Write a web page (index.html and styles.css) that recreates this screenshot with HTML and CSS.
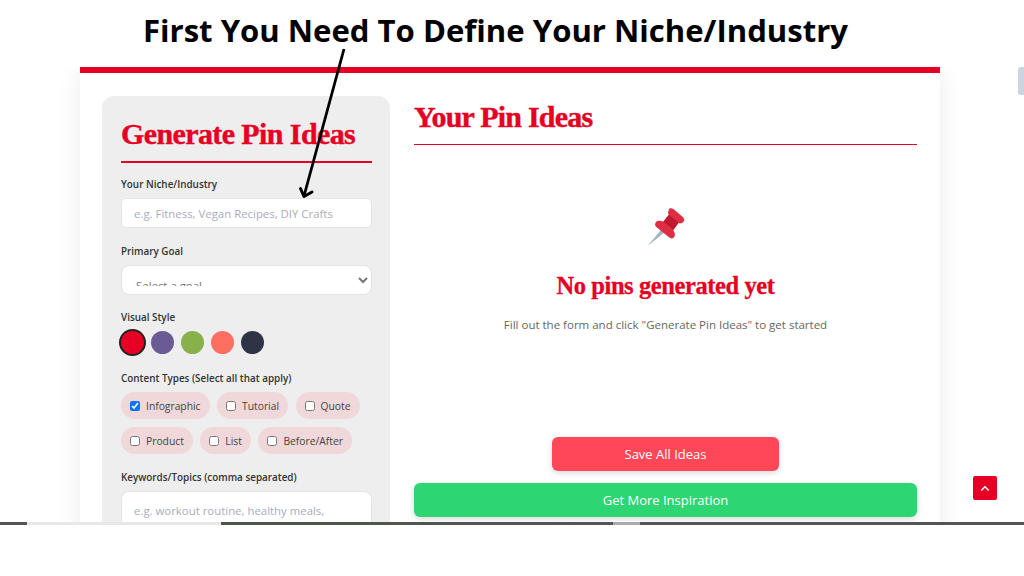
FILE: index.html
```html
<!DOCTYPE html>
<html lang="en">
<head>
  <meta charset="utf-8">
  <title>Generate Pin Ideas</title>
  <link rel="stylesheet" href="styles.css">
</head>
<body>

<h1 class="caption">First You Need To Define Your Niche/Industry</h1>

<div class="stage">
  <div class="card">
    <aside class="sidebar">
      <h2 class="side-title">Generate Pin Ideas</h2>

      <label class="field-label">Your Niche/Industry</label>
      <input class="text-input" type="text" placeholder="e.g. Fitness, Vegan Recipes, DIY Crafts">

      <label class="field-label">Primary Goal</label>
      <select class="select-input">
        <option>Select a goal</option>
      </select>

      <label class="field-label">Visual Style</label>
      <div class="swatches">
        <span class="swatch swatch-red"></span>
        <span class="swatch swatch-purple"></span>
        <span class="swatch swatch-green"></span>
        <span class="swatch swatch-coral"></span>
        <span class="swatch swatch-navy"></span>
      </div>

      <label class="field-label">Content Types (Select all that apply)</label>
      <div class="chips">
        <label class="chip"><input type="checkbox" checked>Infographic</label>
        <label class="chip"><input type="checkbox">Tutorial</label>
        <label class="chip"><input type="checkbox">Quote</label>
        <label class="chip"><input type="checkbox">Product</label>
        <label class="chip"><input type="checkbox">List</label>
        <label class="chip"><input type="checkbox">Before/After</label>
      </div>

      <label class="field-label">Keywords/Topics (comma separated)</label>
      <textarea class="text-area" placeholder="e.g. workout routine, healthy meals,"></textarea>
    </aside>

    <main class="results">
      <h2 class="results-title">Your Pin Ideas</h2>

      <div class="empty">
        <svg class="pin-icon" viewBox="0 0 36 36" width="40" height="40">
          <path fill="#a0b4c2" d="M1.500 35 L13.500 20.500 L16.500 23 Z"/>
          <path fill="#dd2e44" d="M20 2.500 c1.200-1.500 3.200-1.700 4.600-.6 l8.600 7 c1.400 1.200 1.600 3.200.4 4.600 c-1.100 1.400-3 1.600-4.400.7 l-4.800 6.400 c1.700 2.200 2.300 4.800.8 6.600 c-1.200 1.500-3 1.300-4.500.1 L9.600 18.300 c-1.500-1.200-1.900-3-.7-4.500 c1.500-1.800 4.200-1.700 6.700-.6 l5-6.200 c-1.100-1.300-1.100-3.300.4-4.500 Z"/>
          <path fill="#be1931" d="M15.600 13.200 l5-6.200 l8.800 7.200 l-4.800 6.400 c-1.600-1.700-7-6-9-7.400 Z"/>
        </svg>
        <h3 class="empty-title">No pins generated yet</h3>
        <p class="empty-text">Fill out the form and click "Generate Pin Ideas" to get started</p>
      </div>

      <div class="actions">
        <button class="btn btn-save">Save All Ideas</button>
        <button class="btn btn-more">Get More Inspiration</button>
      </div>
    </main>
  </div>

  <span class="scroll-thumb"></span>
  <a class="to-top" href="#">
    <svg viewBox="0 0 12 8" width="10" height="7"><path d="M1.500 6.500 L6 2 L10.500 6.500" stroke="#fff" stroke-width="1.800" fill="none"/></svg>
  </a>
</div>

<div class="progress-line"></div>

<!-- annotation drawn over the page -->
<svg class="arrow" viewBox="0 0 55 155" width="55" height="155">
  <path d="M49 3 L9 150" stroke="#000" stroke-width="2.800" fill="none"/>
  <path d="M5.500 142.500 L9 150.500 L17 146" stroke="#000" stroke-width="3" fill="none" stroke-linecap="round" stroke-linejoin="round"/>
</svg>

</body>
</html>
```

FILE: styles.css
```css
* {
  box-sizing: border-box;
}

body {
  position: relative;
  margin: 0;
  height: 576px;
  overflow: hidden;
  background: #fff;
  font-family: "Open Sans", "Noto Sans", sans-serif;
  color: #333;
}

.caption {
  margin: 0;
  height: 67px;
  padding: 8px 33px 0 0;
  text-align: center;
  font-size: 31.100px;
  line-height: 44px;
  font-weight: 700;
  color: #000;
}

.stage {
  position: relative;
  height: 455px;
  overflow: hidden;
  padding: 0 84px 0 80px;
}

.card {
  display: flex;
  gap: 24px;
  height: 520px;
  padding: 23px 23px 0 22px;
  background: #fff;
  border-top: 6px solid #e60023;
  box-shadow: 0 4px 24px rgba(0, 0, 0, 0.08);
}

.sidebar {
  flex: 0 0 288px;
  height: 520px;
  padding: 19px 18px 18px 19px;
  background: #eeeeee;
  border-radius: 12px;
}

.side-title {
  margin: 0 0 13px;
  padding-bottom: 8px;
  border-bottom: 2px solid #e60023;
  font-family: "Liberation Serif", serif;
  font-size: 30px;
  line-height: 38px;
  font-weight: 700;
  letter-spacing: -0.6px;
  -webkit-text-stroke: 0.4px #e60023;
  color: #e60023;
  white-space: nowrap;
}

.field-label {
  display: block;
  margin-bottom: 6px;
  font-size: 9.900px;
  line-height: 16px;
  font-weight: 600;
  color: #333;
}

.text-input,
.select-input,
.text-area {
  display: block;
  width: 100%;
  margin-bottom: 15px;
  background: #fff;
  border: 1px solid #e4e4e4;
  border-radius: 5px;
  font-family: inherit;
  font-size: 11.400px;
  color: #757575;
}

.text-input {
  height: 30px;
  padding: 0 12px;
}

.select-input {
  height: 30px;
  margin-bottom: 14px;
  padding: 11px 10px 8px;
  border-radius: 8px;
}

.text-area {
  height: 70px;
  padding: 11px 12px;
  border-radius: 8px;
  resize: none;
}

.text-input::placeholder,
.text-area::placeholder {
  color: #a9adb8;
}

.swatches {
  display: flex;
  gap: 7px;
  margin: 1px 0 16px;
}

.swatch {
  width: 23px;
  height: 23px;
  border-radius: 50%;
}

.swatch-red {
  background: #e60023;
  box-shadow: 0 0 0 2px #222;
}

.swatch-purple {
  background: #6b5b95;
}

.swatch-green {
  background: #88b04b;
}

.swatch-coral {
  background: #ff6f61;
}

.swatch-navy {
  background: #2d3446;
}

.chips {
  display: flex;
  flex-wrap: wrap;
  gap: 8px 7.500px;
  margin-bottom: 15px;
}

.chip {
  display: flex;
  align-items: center;
  height: 27px;
  padding: 0 9px;
  background: #f0d7d9;
  border-radius: 14px;
  font-size: 10.300px;
  color: #444;
}

.chip input {
  width: 10px;
  height: 10px;
  margin: 0 6px 0 0;
}

.results {
  flex: 1;
  min-width: 0;
  display: flex;
  flex-direction: column;
}

.results-title {
  margin: 0;
  height: 49px;
  border-bottom: 1.500px solid #e60023;
  font-family: "Liberation Serif", serif;
  font-size: 30px;
  line-height: 42px;
  font-weight: 700;
  letter-spacing: -0.8px;
  -webkit-text-stroke: 0.4px #e60023;
  color: #e60023;
}

.empty {
  height: 292px;
  padding-top: 62px;
  text-align: center;
}

.pin-icon {
  display: block;
  margin: 0 auto 24px;
}

.empty-title {
  margin: 0 0 16px;
  font-family: "Liberation Serif", serif;
  font-size: 24.500px;
  line-height: 30px;
  font-weight: 700;
  letter-spacing: -0.4px;
  -webkit-text-stroke: 0.3px #e60023;
  color: #e60023;
}

.empty-text {
  margin: 0;
  font-size: 11.500px;
  line-height: 16px;
  color: #666;
}

.actions {
  display: flex;
  flex-direction: column;
  align-items: center;
  gap: 12px;
}

.btn {
  height: 34px;
  border: 0;
  border-radius: 6px;
  font-family: inherit;
  font-size: 13px;
  font-weight: 500;
  color: #fff;
  box-shadow: 0 2px 6px rgba(0, 0, 0, 0.15);
}

.btn-save {
  width: 227px;
  background: #ff4757;
}

.btn-more {
  width: 100%;
  background: #2ed573;
}

.arrow {
  position: absolute;
  left: 295px;
  top: 46px;
}

.scroll-thumb {
  position: absolute;
  right: 0;
  top: 0;
  width: 6px;
  height: 28px;
  background: #cbd5e0;
  border-radius: 3px 0 0 3px;
}

.to-top {
  position: absolute;
  left: 973px;
  top: 409px;
  width: 24px;
  height: 24px;
  display: flex;
  align-items: center;
  justify-content: center;
  background: #e60023;
  border-radius: 2px;
}

.progress-line {
  height: 3px;
  background: linear-gradient(to right, #555 0, #555 27px, #e8e8e8 27px, #e8e8e8 221px, #4d5549 221px, #555 613px, #aaa 613px, #aaa 640px, #555 640px);
}
```
